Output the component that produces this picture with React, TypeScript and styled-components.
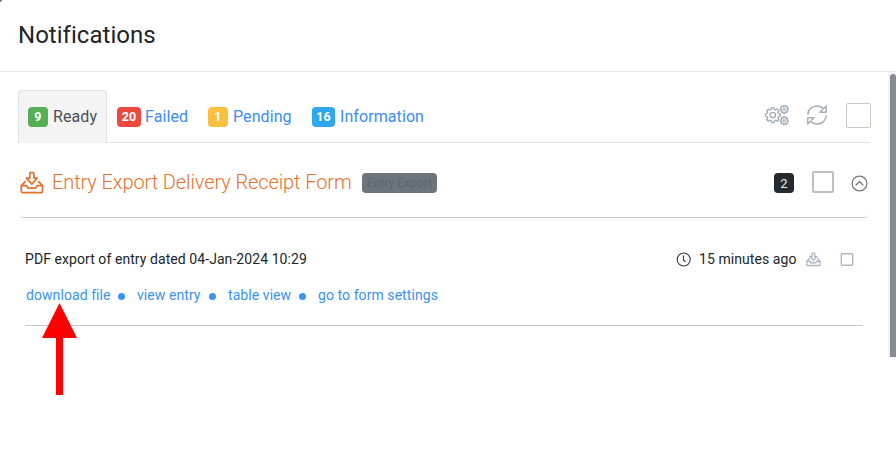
import React from "react";
import styled, { createGlobalStyle } from "styled-components";

const Global = createGlobalStyle`
  * { box-sizing: border-box; }
  html, body { margin: 0; padding: 0; background: #fff; overflow: hidden; }
  body { font-family: Roboto, "Liberation Sans", sans-serif; color: #212529; }
`;

const Modal = styled.div`
  position: relative;
  width: 896px;
  height: 459px;
  display: flex;
  flex-direction: column;
  background: #fff;
`;
const Header = styled.header`
  height: 72px;
  padding: 20px 18px 0;
  border-bottom: 1px solid #e6e8ea;
`;
const Title = styled.h1`
  margin: 0;
  font-size: 24px;
  line-height: 30px;
  font-weight: 400;
  letter-spacing: 0.03px;
  white-space: nowrap;
`;
const Body = styled.div`
  display: flex;
  justify-content: space-between;
`;
const Content = styled.main`
  width: 870px;
  padding: 18px 0 0 18px;
`;
const ScrollTrack = styled.div`
  width: 8px;
  height: 285px;
  padding: 2px 0 0 2px;
  background: #f4f4f5;
`;
const ScrollThumb = styled.div`
  height: 283px;
  border-radius: 3px 3px 0 0;
  background: #868b93;
`;
const TabBar = styled.nav`
  height: 53px;
  display: flex;
  border-bottom: 1px solid #dee2e6;
`;
const Tab = styled.a<{ $active?: boolean; $width: number; $gap: number }>`
  width: ${(p) => p.$width}px;
  height: 53px;
  display: flex;
  align-items: center;
  gap: ${(p) => p.$gap}px;
  padding-left: 9px;
  font-size: 16px;
  letter-spacing: 0.08px;
  white-space: nowrap;
  color: ${(p) => (p.$active ? "#495057" : "#3b8cf4")};
  border: 1px solid ${(p) => (p.$active ? "#dee2e6" : "transparent")};
  border-bottom: 0;
  border-radius: 4px 4px 0 0;
  background: ${(p) => (p.$active ? "#f4f4f4" : "transparent")};
`;
const TabLabel = styled.span`
  padding-bottom: 2px;
`;
const Count = styled.span<{ $color: string; $width: number }>`
  width: ${(p) => p.$width}px;
  height: 20px;
  border-radius: 4px;
  background: ${(p) => p.$color};
  color: #fff;
  font-size: 12.5px;
  line-height: 20px;
  font-weight: 700;
  text-align: center;
`;
const Tools = styled.div`
  display: flex;
  align-items: center;
  margin-left: auto;
`;
const TabTools = styled(Tools)`
  margin-right: -1px;
  padding-bottom: 1px;
`;
const Check = styled.span<{ $size: number; $color: string; $border?: number }>`
  width: ${(p) => p.$size}px;
  height: ${(p) => p.$size}px;
  flex: none;
  border: ${(p) => p.$border ?? 1}px solid ${(p) => p.$color};
  border-radius: 2px;
`;
const GroupCheck = styled(Check)`
  margin: 0 17px 2px 18px;
`;
const Group = styled.section`
  width: 848px;
  height: 75px;
  margin-left: 2px;
  display: flex;
  align-items: center;
  padding-top: 6px;
  border-bottom: 1px solid #c8cbcb;
  border-radius: 0 0 4px 4px;
`;
const GroupTitle = styled.h2`
  margin: 0 0 2px 8px;
  width: 310px;
  font-size: 20px;
  line-height: 26px;
  font-weight: 300;
  letter-spacing: -0.1px;
  color: #e5712d;
  white-space: nowrap;
`;
const Tag = styled.span`
  width: 75px;
  height: 20px;
  border-radius: 4px;
  background: #6c757d;
  color: #5d666e;
  font-size: 12px;
  line-height: 20px;
  text-align: center;
  white-space: nowrap;
`;
const Total = styled.span`
  width: 20px;
  height: 20px;
  border-radius: 4px;
  background: #232b30;
  color: #e9ebec;
  font-size: 13px;
  line-height: 21px;
  text-align: center;
`;
const Entry = styled.article`
  width: 838px;
  height: 108px;
  margin-left: 7px;
  padding-top: 31px;
  border-bottom: 1px solid #c8cbcd;
  font-size: 14px;
  letter-spacing: 0.07px;
`;
const EntryRow = styled.div`
  height: 20px;
  display: flex;
  align-items: center;
  justify-content: space-between;
  white-space: nowrap;
`;
const EntryMeta = styled.div`
  display: flex;
  align-items: center;
  padding-right: 9px;
`;
const Age = styled.span`
  width: 98px;
  margin: 0 9px 0 8px;
`;
const Links = styled.div`
  display: flex;
  align-items: center;
  height: 20px;
  margin-top: 16px;
  padding-left: 1px;
  white-space: nowrap;
  color: #3a92f2;
`;
const Link = styled.a<{ $width: number }>`
  width: ${(p) => p.$width}px;
`;
const Dot = styled.span`
  width: 7px;
  height: 7px;
  margin: 2px 12px 0 8px;
  border-radius: 50%;
  background: #3a92f2;
`;
const Pointer = styled.svg`
  position: absolute;
  left: 42px;
  top: 303px;
`;
const Corner = styled.i`
  position: absolute;
  left: 0;
  top: 0;
  width: 2px;
  height: 2px;
  background: linear-gradient(135deg, #777 50%, transparent 50%);
`;
const Icon = styled.svg<{ $right?: number }>`
  flex: none;
  fill: none;
  stroke-linecap: round;
  stroke-linejoin: round;
  margin-right: ${(p) => p.$right ?? 0}px;
`;

function gear(cx: number, cy: number, outer: number, inner: number, teeth: number) {
  const points: string[] = [];
  const step = (Math.PI * 2) / teeth;
  for (let i = 0; i < teeth; i++) {
    const a = i * step;
    [[-0.32, inner], [-0.2, outer], [0.2, outer], [0.32, inner]].forEach(([t, r]) => {
      points.push(`${(cx + Math.cos(a + t * step) * r).toFixed(2)} ${(cy + Math.sin(a + t * step) * r).toFixed(2)}`);
    });
  }
  return `M${points.join("L")}Z`;
}

const Gears = () => (
  <Icon width="25" height="22" viewBox="0.5 0.9 25 22" stroke="#a5afba" $right={17}>
    <path d={gear(8.3, 11, 7.6, 5.9, 8)} strokeWidth="1.4" />
    <circle cx="8.3" cy="11" r="2.7" strokeWidth="1.4" />
    <path d={gear(19.8, 5.2, 4, 3.1, 8)} strokeWidth="1.3" />
    <circle cx="19.8" cy="5.2" r="1.1" strokeWidth="1.1" />
    <path d={gear(19.8, 16.6, 4, 3.1, 8)} strokeWidth="1.3" />
    <circle cx="19.8" cy="16.6" r="1.1" strokeWidth="1.1" />
  </Icon>
);

const RefreshIcon = styled(Icon)`
  margin-bottom: 2px;
`;
const Refresh = () => (
  <RefreshIcon width="20" height="20" viewBox="0 0 20 20" stroke="#a5afba" strokeWidth="1.5" $right={19}>
    <path d="M1 9.2C1 4.5 4.8 1 9.7 1C12.4 1 14.8 2.1 16.4 3.8L19.2 1V7.2H13L15.1 5.1" />
    <path d="M19 10.8C19 15.5 15.2 19 10.3 19C7.6 19 5.2 17.9 3.6 16.2L.8 19V12.8H7L4.9 14.9" />
  </RefreshIcon>
);

const Inbox = ({ size, color, width, right }: { size: number; color: string; width: number; right?: number }) => (
  <Icon width={size} height={size} viewBox="0 0 24 24" stroke={color} strokeWidth={width} $right={right}>
    <path d="M9.8 2.4Q9.8 1.7 10.5 1.7H13.1Q13.8 1.7 13.8 2.4V7.1H17.3L11.8 13.1L6.3 7.1H9.8Z" />
    <path d="M5.2 10.6L1.3 14.7V20.2Q1.3 21.6 2.7 21.6H21.1Q22.5 21.6 22.5 20.2V14.7L18.6 10.6M1.4 14.7H6.5L8.2 17.2H15.6L17.3 14.7H22.4" />
  </Icon>
);

const tabs = [
  { label: "Ready", count: 9, color: "#56ae55", badge: 20, width: 89, gap: 5 },
  { label: "Failed", count: 20, color: "#ec4a3f", badge: 24, width: 91, gap: 4 },
  { label: "Pending", count: 1, color: "#f8bf40", badge: 20, width: 104, gap: 5 },
  { label: "Information", count: 16, color: "#2ea7f0", badge: 23, width: 126, gap: 5 },
];
const links = [
  { label: "download file", width: 84 },
  { label: "view entry", width: 64 },
  { label: "table view", width: 63 },
  { label: "go to form settings", width: 121 },
];

export default function App() {
  return (
    <Modal>
      <Global />
      <Corner />
      <Header><Title>Notifications</Title></Header>
      <Body>
        <Content>
          <TabBar>
            {tabs.map((t, i) => (
              <Tab key={t.label} $active={i === 0} $width={t.width} $gap={t.gap}>
                <Count $color={t.color} $width={t.badge}>{t.count}</Count>
                <TabLabel>{t.label}</TabLabel>
              </Tab>
            ))}
            <TabTools>
              <Gears />
              <Refresh />
              <Check $size={25} $color="#cbc8c0" />
            </TabTools>
          </TabBar>
          <Group>
            <Inbox size={24} color="#e5712d" width={1.7} />
            <GroupTitle>Entry Export Delivery Receipt Form</GroupTitle>
            <Tag>Entry Export</Tag>
            <Tools>
              <Total>2</Total>
              <GroupCheck $size={22} $color="#bfbfbf" $border={2} />
              <Icon width="17" height="17" viewBox="0 0 17 17" stroke="#777" strokeWidth="1.2">
                <circle cx="8.5" cy="8.5" r="7.4" />
                <path d="M5.1 10L8.5 6.5L11.9 10" />
              </Icon>
            </Tools>
          </Group>
          <Entry>
            <EntryRow>
              <span>PDF export of entry dated 04-Jan-2024 10:29</span>
              <EntryMeta>
                <Icon width="15" height="15" viewBox="-0.5 0 15 15" stroke="#343a40" strokeWidth="1.1">
                  <circle cx="7.2" cy="7.5" r="6.5" />
                  <path d="M6.9 3.8V8L8.8 9.5" />
                </Icon>
                <Age>15 minutes ago</Age>
                <Inbox size={15} color="#b0b8c2" width={2.2} right={19} />
                <Icon width="14" height="13" viewBox="0 0 14 13" stroke="#b0b8c2" strokeWidth="1.4">
                  <rect x="1.3" y="0.8" width="11.4" height="11.4" rx="0.7" />
                </Icon>
              </EntryMeta>
            </EntryRow>
            <Links>
              {links.map((l, i) => (
                <React.Fragment key={l.label}>
                  {i > 0 && <Dot />}
                  <Link $width={l.width}>{l.label}</Link>
                </React.Fragment>
              ))}
            </Links>
          </Entry>
        </Content>
        <ScrollTrack><ScrollThumb /></ScrollTrack>
      </Body>
      <Pointer width="35" height="92" viewBox="0 0 35 92">
        <path d="M17.5 0L35 35H21V92H14V35H0Z" fill="#f00" />
      </Pointer>
    </Modal>
  );
}
